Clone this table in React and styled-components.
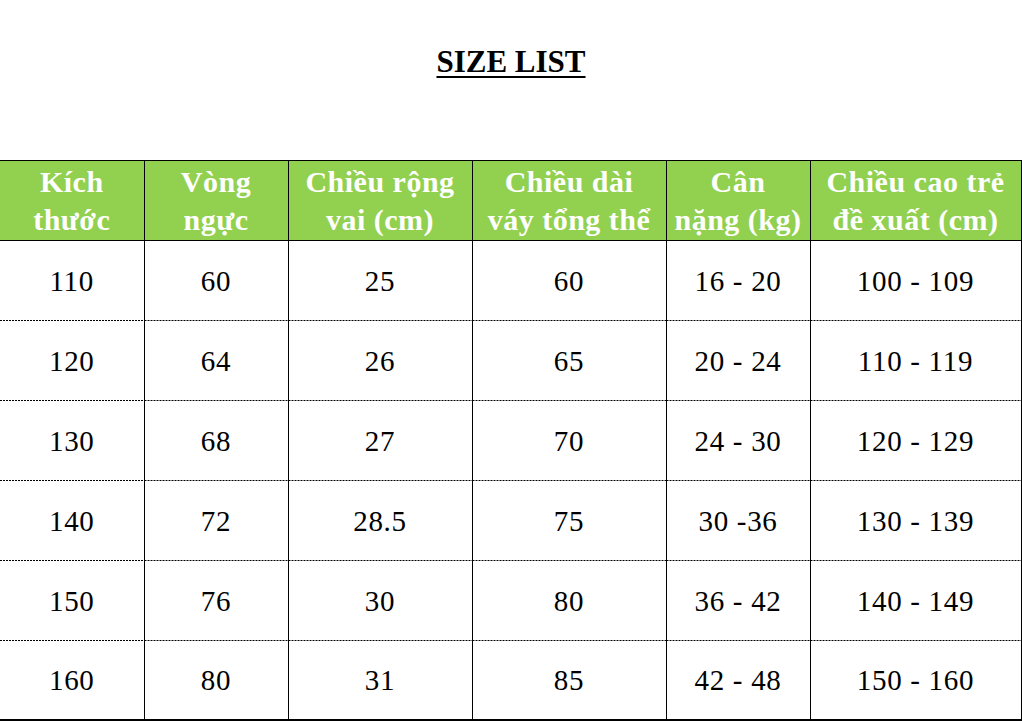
import styled, { createGlobalStyle } from "styled-components";

const GlobalStyle = createGlobalStyle`
  html, body {
    margin: 0;
    padding: 0;
    background: #ffffff;
    overflow: hidden;
  }
`;

const Page = styled.div`
  width: 1022px;
  height: 721px;
  font-family: "Liberation Serif", "Times New Roman", serif;
  color: #000;
`;

const Title = styled.h1`
  margin: 0 0 76px;
  padding-top: 40px;
  height: 44px;
  line-height: 44px;
  text-align: center;
  font-size: 31px;
  font-weight: bold;
  text-decoration: underline;
  text-decoration-thickness: 2px;
  text-underline-offset: 4px;
`;

const Table = styled.table`
  width: 1021px;
  border-collapse: collapse;
  table-layout: fixed;
`;

const HeadCell = styled.th`
  height: 79px;
  padding: 0;
  background: #92d050;
  color: #ffffff;
  font-size: 30px;
  font-weight: bold;
  line-height: 38px;
  letter-spacing: 0.5px;
  text-align: center;
  vertical-align: middle;
  border-top: 1px solid #000;
  border-bottom: 1px solid #000;
  border-right: 1px solid #000;
  white-space: nowrap;
`;

const Cell = styled.td`
  height: ${({ $last }) => ($last ? "78px" : "80px")};
  padding: 0;
  font-size: 29px;
  letter-spacing: 0.7px;
  text-align: center;
  vertical-align: middle;
  border-right: 1px solid #000;
  border-bottom: ${({ $last }) => ($last ? "2px solid #000" : "none")};
  background-image: ${({ $last }) =>
    $last ? "none" : "linear-gradient(to right, #000 0 2px, transparent 2px 3px)"};
  background-size: 3px 1px;
  background-repeat: repeat-x;
  background-position: left bottom;
`;

const columns = [
  { width: 144, label: ["Kích", "thước"] },
  { width: 144, label: ["Vòng", "ngực"] },
  { width: 184, label: ["Chiều rộng", "vai (cm)"] },
  { width: 194, label: ["Chiều dài", "váy tổng thể"] },
  { width: 144, label: ["Cân", "nặng (kg)"] },
  { width: 211, label: ["Chiều cao trẻ", "đề xuất (cm)"] },
];

const rows = [
  ["110", "60", "25", "60", "16 - 20", "100 - 109"],
  ["120", "64", "26", "65", "20 - 24", "110 - 119"],
  ["130", "68", "27", "70", "24 - 30", "120 - 129"],
  ["140", "72", "28.5", "75", "30 -36", "130 - 139"],
  ["150", "76", "30", "80", "36 - 42", "140 - 149"],
  ["160", "80", "31", "85", "42 - 48", "150 - 160"],
];

export default function App() {
  return (
    <Page>
      <GlobalStyle />
      <Title>SIZE LIST</Title>
      <Table>
        <colgroup>
          {columns.map((c, i) => (
            <col key={i} style={{ width: c.width }} />
          ))}
        </colgroup>
        <thead>
          <tr>
            {columns.map((c, i) => (
              <HeadCell key={i}>
                {c.label[0]}
                <br />
                {c.label[1]}
              </HeadCell>
            ))}
          </tr>
        </thead>
        <tbody>
          {rows.map((r, i) => (
            <tr key={i}>
              {r.map((v, j) => (
                <Cell key={j} $last={i === rows.length - 1}>
                  {v}
                </Cell>
              ))}
            </tr>
          ))}
        </tbody>
      </Table>
    </Page>
  );
}
